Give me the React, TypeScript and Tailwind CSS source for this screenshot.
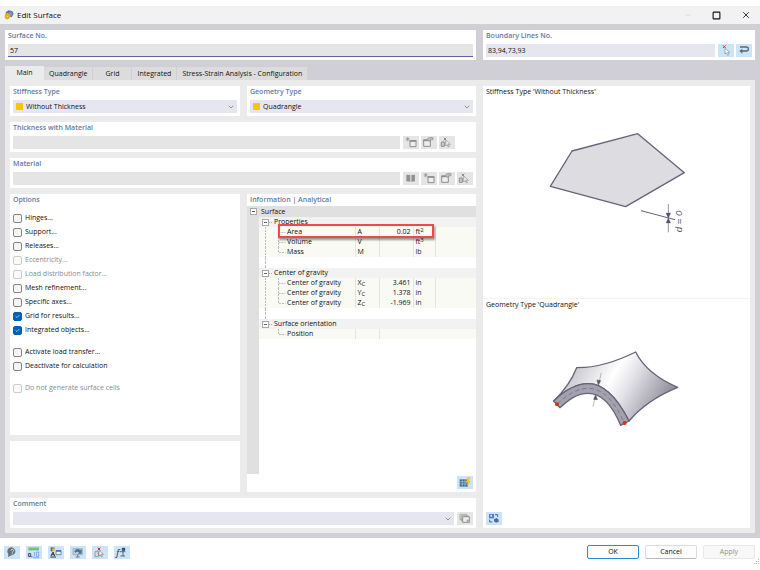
import type { ComponentProps, ReactNode } from 'react'
import { Check, ChevronDown, Minus, Square, X } from 'lucide-react'
import clsx from 'clsx'

const tabs = ['Main', 'Quadrangle', 'Grid', 'Integrated', 'Stress-Strain Analysis - Configuration']

const optionGroups = [
  [
    { label: 'Hinges...' },
    { label: 'Support...' },
    { label: 'Releases...' },
    { label: 'Eccentricity...', disabled: true },
    { label: 'Load distribution factor...', disabled: true },
    { label: 'Mesh refinement...' },
    { label: 'Specific axes...' },
    { label: 'Grid for results...', checked: true },
    { label: 'Integrated objects...', checked: true },
  ],
  [{ label: 'Activate load transfer...' }, { label: 'Deactivate for calculation' }],
  [{ label: 'Do not generate surface cells', disabled: true }],
]

type Row = { name: string; symbol?: ReactNode; value?: string; unit?: ReactNode }

const infoGroups: { title: string; rows: Row[] }[] = [
  {
    title: 'Properties',
    rows: [
      { name: 'Area', symbol: 'A', value: '0.02', unit: <>ft<Sup>2</Sup></> },
      { name: 'Volume', symbol: 'V', unit: <>ft<Sup>3</Sup></> },
      { name: 'Mass', symbol: 'M', unit: 'lb' },
    ],
  },
  {
    title: 'Center of gravity',
    rows: [
      { name: 'Center of gravity', symbol: <>X<Sub>C</Sub></>, value: '3.461', unit: 'in' },
      { name: 'Center of gravity', symbol: <>Y<Sub>C</Sub></>, value: '1.378', unit: 'in' },
      { name: 'Center of gravity', symbol: <>Z<Sub>C</Sub></>, value: '-1.969', unit: 'in' },
    ],
  },
  { title: 'Surface orientation', rows: [{ name: 'Position' }] },
]

function Sup({ children }: { children: ReactNode }) {
  return <sup className="top-[-2px] text-[6px] leading-none">{children}</sup>
}

function Sub({ children }: { children: ReactNode }) {
  return <sub className="bottom-[-1px] text-[6px] leading-none">{children}</sub>
}

function Panel({ title, htmlFor, className, children }: { title?: string; htmlFor?: string; className?: string; children?: ReactNode }) {
  return (
    <section className={clsx('flex flex-col bg-white px-[3px] pt-px pb-[3px]', className)}>
      {title && (
        <label htmlFor={htmlFor} className="mb-[3px] block h-[10px] font-semibold text-[#6478a3]">
          {title}
        </label>
      )}
      {children}
    </section>
  )
}

function IconButton({ label, className, children, ...props }: ComponentProps<'button'> & { label: string }) {
  return (
    <button
      type="button"
      aria-label={label}
      className={clsx('h-[13px] w-4 shrink-0 bg-[#cce4f7] disabled:bg-[#e5e5e5]', className)}
      {...props}
    >
      <svg viewBox="0 0 48 39" className="size-full" fill="none">
        {children}
      </svg>
    </button>
  )
}

function TypeSelect({ id, value }: { id: string; value: string }) {
  return (
    <div className="flex h-[13px] items-center bg-[#e6e6f1] px-[2px]">
      <span className="mr-[3px] ml-px size-[7px] bg-[#f7c600]" />
      <select id={id} className="h-full min-w-0 flex-1 appearance-none bg-transparent leading-[13px] outline-none">
        <option>{value}</option>
      </select>
      <ChevronDown className="size-2 text-[#666]" />
    </div>
  )
}

function NewIcon() {
  return (
    <g stroke="#8e8e8e" strokeWidth="2">
      <path d="M14 3v13M8 9h12M10 5l8 9M18 5l-8 9" />
      <path d="M21 14h18v18H21z" fill="#eee" strokeWidth="3" />
      <path d="M20 15h20" strokeWidth="5" />
    </g>
  )
}

function EditIcon() {
  return (
    <g stroke="#8e8e8e" strokeWidth="2">
      <path d="M8 12h20v19H8z" fill="#eee" strokeWidth="3" />
      <path d="M7 13h22" strokeWidth="5" />
      <path d="M17 11c5-7 11-7 19-6v6c-6 0-8 1-10 5z" fill="#bbb" />
    </g>
  )
}

function PickIcon() {
  return (
    <g stroke="#8e8e8e" strokeWidth="3">
      <path d="M14 5l8 8M22 5l-8 8" />
      <path d="M7 18h9v13H7z" fill="#ccc" />
      <path d="M20 12v18l4-4 4 7 3-1-4-7h7z" fill="#eee" strokeWidth="2" />
    </g>
  )
}

function Expander() {
  return (
    <svg viewBox="0 0 7 7" className="size-[7px] shrink-0" shapeRendering="crispEdges">
      <path d="M.5.5h6v6h-6z" fill="#fff" stroke="#a8a8a8" />
      <path d="M2 3.5h3" stroke="#666" />
    </svg>
  )
}

function OptionCheckbox({ label, checked, disabled }: { label: string; checked?: boolean; disabled?: boolean }) {
  return (
    <label className={clsx('relative flex h-[14px] items-center gap-[3px]', disabled && 'text-[#8a8a8a]')}>
      <input
        type="checkbox"
        defaultChecked={checked}
        disabled={disabled}
        className="peer size-[9px] appearance-none rounded-xs border border-[#858585] bg-[#f5f5f5] checked:border-[#005fb8] checked:bg-[#005fb8] disabled:border-[#ccc] disabled:bg-[#fafafa]"
      />
      <Check className="pointer-events-none absolute left-[2px] hidden size-[5px] text-white peer-checked:block" strokeWidth={3} />
      {label}
    </label>
  )
}

function TreeTable() {
  return (
    <table className="w-full table-fixed border-collapse leading-[10px]">
      <colgroup>
        <col className="w-[96px]" />
        <col className="w-6" />
        <col className="w-[34px]" />
        <col className="w-[22px]" />
        <col />
      </colgroup>
      <thead>
        <tr className="h-[11px] bg-[#e0e0e0] text-left">
          <th colSpan={5} className="p-0 pl-[2px] font-normal">Surface</th>
        </tr>
      </thead>
      {infoGroups.map((group, index) => {
        const last = index === infoGroups.length - 1
        return (
          <tbody key={group.title}>
            <tr className="h-[10px] bg-[#f2f2f2]">
              <td colSpan={5} className="p-0">
                <div className="flex h-[10px] items-center pl-[3px]">
                  <Expander />
                  <span className="mr-[2px] w-[3px] border-t border-dotted border-[#aaa]" />
                  {group.title}
                </div>
              </td>
            </tr>
            {group.rows.map((row, i) => (
              <tr key={i} className="h-[10px] bg-[#f9faf4]">
                <td className="border-r border-[#e4e4e0] p-0">
                  <div className="flex h-[10px] items-center">
                    <svg viewBox="0 0 28 10" className="h-[10px] w-7 shrink-0" stroke="#bdbdbd" strokeDasharray="2 1" fill="none">
                      {!last && <path d="M6.500 0v10" />}
                      <path d={i === group.rows.length - 1 ? 'M19.500 0v5.500h7' : 'M19.500 0v10M19.500 5.500h7'} />
                    </svg>
                    {row.name}
                  </div>
                </td>
                <td className="border-r border-[#e4e4e0] p-0 pl-[2px]">{row.symbol}</td>
                <td className={clsx('p-0 pr-[2px] text-right', !last && 'border-r border-[#e4e4e0]')}>{row.value}</td>
                <td className={clsx('p-0 pl-[2px] text-[#3c1030]', !last && 'border-r border-[#e4e4e0]')}>{row.unit}</td>
                <td className="p-0" />
              </tr>
            ))}
            {!last && (
              <tr className="h-[11px]">
                <td colSpan={5} className="p-0">
                  <div className="ml-[6px] h-[11px] border-l border-dashed border-[#bdbdbd]" />
                </td>
              </tr>
            )}
          </tbody>
        )
      })}
    </table>
  )
}

function ThicknessDrawing() {
  return (
    <svg viewBox="9 -39 801 603" className="h-[201px] w-full" fill="none" stroke="#666478">
      <path d="M276 123L473 71L613 188L437 290L211 229Z" fill="#dddce1" strokeWidth="4" strokeLinejoin="round" />
      <path d="M483 302L585 329" strokeWidth="3" />
      <path d="M565 282v85" strokeWidth="2" />
      <path d="M558 309h14l-7 16zM558 339h14l-7-15z" fill="#555368" />
      <text
        transform="translate(607 367) rotate(-90)"
        className="font-['Liberation_Sans',sans-serif]"
        fontSize="29"
        fontStyle="italic"
        fill="#555368"
        stroke="none"
      >
        d = 0
      </text>
    </svg>
  )
}

function QuadrangleDrawing() {
  return (
    <svg viewBox="9 60 801 600" className="h-[200px] w-full" fill="none" stroke="#666478" strokeWidth="4" strokeLinejoin="round">
      <defs>
        <linearGradient id="shell" gradientUnits="userSpaceOnUse" x1="285" y1="230" x2="530" y2="370">
          <stop offset="0" stopColor="#c9c8ce" />
          <stop offset="0.4" stopColor="#ffffff" />
          <stop offset="0.6" stopColor="#e2e1e6" />
          <stop offset="1" stopColor="#95939f" />
        </linearGradient>
      </defs>
      <path
        d="M221 333Q270 285 290 233Q370 234 467 186Q500 252 593 292Q500 330 447 393C425 350 385 281 325 281C285 281 250 305 221 333Z"
        fill="url(#shell)"
      />
      <path d="M221 333C250 305 285 281 325 281C385 281 425 350 447 393L422 406C405 365 375 310 325 310C290 310 265 330 240 353Z" fill="#a3a1ae" />
      <path d="M232 342C260 315 290 295 325 295C380 295 412 355 433 398" strokeWidth="2" strokeDasharray="13 9" />
      <path d="M364 248L357 278M339 350L346 320" strokeWidth="2" stroke="#99979f" />
      <path d="M351 270l11 2l-7 13zM341 328l11 1l-5-15z" fill="#555368" strokeWidth="2" />
      <circle cx="231" cy="343" r="4" fill="#c93a13" stroke="#c93a13" />
      <circle cx="434" cy="399" r="4" fill="#c93a13" stroke="#c93a13" />
    </svg>
  )
}

function TitleBar() {
  return (
    <header className="flex h-[18px] items-center bg-[#f2f2f2] pr-[9px] pl-1">
      <svg viewBox="0 0 30 30" className="mr-[3px] size-[10px]">
        <path d="M5 7L14 1l11 3 4 7-6 11-8-3-9-6z" fill="#55718f" />
        <path d="M13 9l7-5 6 8-5 9z" fill="#7b98b5" />
        <path d="M3 12l7-4 8 5v10l-8 6-8-5z" fill="#e3b327" />
        <path d="M7 16h6v7H7z" fill="#f7dc75" stroke="#a57c13" />
      </svg>
      <h1 className="flex-1 text-[8px]">Edit Surface</h1>
      <div className="flex items-center gap-5">
        <button type="button" aria-label="Minimize" disabled><Minus className="size-2 text-[#d5d5d5]" /></button>
        <button type="button" aria-label="Maximize"><Square className="size-[9px]" strokeWidth={3} /></button>
        <button type="button" aria-label="Close"><X className="size-[10px]" strokeWidth={2} /></button>
      </div>
    </header>
  )
}

function Footer() {
  return (
    <footer className="relative flex h-8 items-center bg-white pr-[5px] pb-1 pl-1">
      <div className="flex flex-1 gap-[6px]">
        <IconButton label="Help">
          <path d="M12 33l1-9a12 12 0 1 1 10 4z" fill="#65717a" />
          <path d="M20 13q5-6 9 0q0 3-4 5v2M25 22v3" stroke="#dce6ee" strokeWidth="3" />
        </IconButton>
        <IconButton label="Units and decimal places">
          <path d="M7 4h32v9H7z" fill="#7bc96f" />
          <path d="M10 9v4M16 9v4M22 9v4M28 9v4M34 9v4" stroke="#408a40" />
          <text x="5" y="32" fontSize="18" fontWeight="700" fill="#243040">0,</text>
          <path d="M25 18v13M31 18h7v13h-7zM21 35h19" stroke="#5b91dd" strokeWidth="2" />
        </IconButton>
        <IconButton label="Display properties">
          <path d="M8 4h6v6H8z" fill="#d32f2f" />
          <path d="M14 4h6v6h-6z" fill="#50b848" />
          <path d="M8 10h6v6H8z" fill="#2f66d3" />
          <path d="M14 10h6v6h-6z" fill="#f2c600" />
          <path d="M9 30l6-12 5 12M11 26h8M7 33h17" stroke="#2c3440" strokeWidth="3" />
          <path d="M24 14h15v12H24z" fill="#eef4fb" stroke="#4a5f8c" strokeWidth="2" />
          <path d="M24 15h15" stroke="#405cae" strokeWidth="4" />
        </IconButton>
        <IconButton label="View">
          <path d="M9 8h28v18H9z" fill="#c3d3e0" stroke="#879baa" strokeWidth="2" />
          <path d="M13 16Q20 5 31 12l4-3v14H23l4-4q-6-5-11 2z" fill="#4c7391" />
          <path d="M23 26v6M17 33h12" stroke="#67737c" strokeWidth="3" />
        </IconButton>
        <IconButton label="Deselect">
          <path d="M17 5l8 8M25 5l-8 8" stroke="#d92a2a" strokeWidth="3" />
          <path d="M9 17h10v15H9z" fill="#dedede" stroke="#777" strokeWidth="2" />
          <path d="M21 13v17l4-4 3 7 3-1-3-7h6z" fill="#fff" stroke="#777" strokeWidth="2" />
        </IconButton>
        <IconButton label="Formula">
          <text x="7" y="29" fontSize="28" fontStyle="italic" fill="#26323e">f</text>
          <path d="M25 7h7v6h-7z" fill="#47689b" stroke="#253f66" strokeWidth="3" />
          <path d="M18 17h16M27 17v13M19 30h14" stroke="#26323e" strokeWidth="2" />
        </IconButton>
      </div>
      <div className="flex gap-[6px]">
        <button type="button" className="h-[14px] w-[52px] rounded-xs border border-[#2f86ce] bg-[#fdfdfd]">OK</button>
        <button type="button" className="h-[14px] w-[52px] rounded-xs border border-[#dcdcdc] border-b-[#bbb] bg-[#fdfdfd]">Cancel</button>
        <button type="button" disabled className="h-[14px] w-[52px] rounded-xs border border-[#e8e8e8] bg-[#f8f8f8] text-[#909090]">Apply</button>
      </div>
      <svg viewBox="0 0 6 6" className="absolute right-0 bottom-[5px] size-[6px]" fill="#b5b5b5">
        <path d="M4 0h1v1H4zM2 2h1v1H2zM4 2h1v1H4zM0 4h1v1H0zM2 4h1v1H2zM4 4h1v1H4z" />
      </svg>
    </footer>
  )
}

export default function App() {
  return (
    <div className="flex min-h-screen flex-col bg-white pt-[6px] font-['Open_Sans','Noto_Sans',sans-serif] text-[7px] leading-[10px] text-[#111]">
      <TitleBar />

      <main className="flex flex-1 flex-col bg-[#d0cfd5] px-[5px] pt-[6px] pb-[5px]">
        <div className="mb-[6px] flex gap-[7px]">
          <Panel title="Surface No." htmlFor="surface-no" className="min-w-0 flex-1">
            <input id="surface-no" defaultValue="57" className="h-[13px] w-full border-b border-[#625ea8] bg-[#e5e5e5] px-[2px] outline-none" />
          </Panel>
          <Panel title="Boundary Lines No." htmlFor="boundary-lines" className="w-[272px]">
            <div className="flex gap-[2px]">
              <input id="boundary-lines" defaultValue="83,94,73,93" className="mr-px h-[13px] min-w-0 flex-1 bg-[#e6e6f1] px-[2px] outline-none" />
              <IconButton label="Select lines">
                <path d="M15 4l8 8M23 4l-8 8" stroke="#d9303a" strokeWidth="3" />
                <path d="M21 13v17l4-4 4 8 3-2-3-7h6z" fill="#fff" stroke="#888" strokeWidth="2" />
              </IconButton>
              <IconButton label="Reverse orientation">
                <path d="M12 9h19q6 0 6 6t-6 6H16" stroke="#666" strokeWidth="4" />
                <path d="M19 14l-9 7 9 8z" fill="#666" />
              </IconButton>
            </div>
          </Panel>
        </div>

        <div role="tablist" className="flex h-[14px] items-end">
          {tabs.map((tab, index) => (
            <button
              key={tab}
              type="button"
              role="tab"
              aria-selected={index === 0}
              className={clsx(
                'min-w-[39px] px-[5px]',
                index === 0 ? 'h-[14px] bg-[#ebebeb]' : 'h-[13px] border-r border-[#d0cfd5] bg-[#dcdcdc]',
              )}
            >
              {tab}
            </button>
          ))}
        </div>

        <div className="flex flex-1 gap-[7px] bg-[#ebebeb] px-[5px] pt-[6px] pb-[5px]">
          <div className="flex min-w-0 flex-1 flex-col gap-[6px]">
            <div className="grid grid-cols-[230px_1fr] gap-[7px]">
              <Panel title="Stiffness Type" htmlFor="stiffness-type">
                <TypeSelect id="stiffness-type" value="Without Thickness" />
              </Panel>
              <Panel title="Geometry Type" htmlFor="geometry-type">
                <TypeSelect id="geometry-type" value="Quadrangle" />
              </Panel>
            </div>

            <Panel title="Thickness with Material" htmlFor="thickness">
              <div className="flex gap-[2px] pr-[18px]">
                <select id="thickness" disabled className="mr-px h-[13px] min-w-0 flex-1 appearance-none bg-[#e5e5e5]" />
                <IconButton label="New thickness" disabled><NewIcon /></IconButton>
                <IconButton label="Edit thickness" disabled><EditIcon /></IconButton>
                <IconButton label="Pick thickness" disabled><PickIcon /></IconButton>
              </div>
            </Panel>

            <Panel title="Material" htmlFor="material">
              <div className="flex gap-[2px]">
                <select id="material" disabled className="mr-px h-[13px] min-w-0 flex-1 appearance-none bg-[#e5e5e5]" />
                <IconButton label="Material library" disabled>
                  <path d="M10 8l12 1v20l-12-1zM25 9l11-1v20l-11 1z" fill="#969696" />
                  <path d="M15 9v19M31 9v19" stroke="#777" />
                </IconButton>
                <IconButton label="New material" disabled><NewIcon /></IconButton>
                <IconButton label="Edit material" disabled><EditIcon /></IconButton>
                <IconButton label="Pick material" disabled><PickIcon /></IconButton>
              </div>
            </Panel>

            <div className="grid flex-1 grid-cols-[230px_1fr] gap-[7px]">
              <div className="flex flex-col gap-[6px]">
                <Panel title="Options" className="flex-1">
                  <div className="flex flex-col gap-2 pt-[3px]">
                    {optionGroups.map((group, index) => (
                      <div key={index}>
                        {group.map((option) => (
                          <OptionCheckbox key={option.label} {...option} />
                        ))}
                      </div>
                    ))}
                  </div>
                </Panel>
                <Panel className="h-[51px]" />
              </div>

              <section className="flex flex-col bg-white pt-px">
                <h2 className="mb-px h-[10px] px-[3px] font-semibold text-[#6478a3]">Information | Analytical</h2>
                <div className="relative flex flex-1">
                  <div className="w-3 shrink-0 bg-[#e0e0e0] pt-[2px] pl-[3px]">
                    <Expander />
                  </div>
                  <div className="min-w-0 flex-1">
                    <TreeTable />
                  </div>
                  <div className="pointer-events-none absolute top-[18px] left-[31px] h-[14px] w-[156px] border-2 border-[#ee4a4a] shadow-[1px_2px_2px_rgba(0,0,0,0.4)]" />
                </div>
                <div className="flex justify-end px-[3px] pt-[2px] pb-[3px]">
                  <IconButton label="Recalculate">
                    <path d="M8 10h25v22H8z" fill="#3d6a8f" />
                    <path d="M8 17h25M8 24h25M16 10v22M24 10v22" stroke="#a8cbe4" strokeWidth="2" />
                    <path d="M31 4h8l-3 11h5L30 34l2-14h-5z" fill="#f6c21c" />
                  </IconButton>
                </div>
              </section>
            </div>

            <Panel title="Comment" htmlFor="comment">
              <div className="flex gap-[3px]">
                <div className="flex h-[13px] min-w-0 flex-1 items-center bg-[#e6e6f1] px-[2px]">
                  <select id="comment" className="h-full min-w-0 flex-1 appearance-none bg-transparent outline-none" />
                  <ChevronDown className="size-2 text-[#666]" />
                </div>
                <IconButton label="Comment templates" disabled>
                  <path d="M9 7h20v16H9zM13 11h20v16H13z" fill="#ddd" stroke="#999" strokeWidth="2" />
                  <path d="M17 14h20v17H17z" fill="#eee" stroke="#8e8e8e" strokeWidth="3" />
                  <path d="M29 23h6v6h-6z" fill="#999" />
                </IconButton>
              </div>
            </Panel>
          </div>

          <aside className="flex w-[267px] flex-col bg-white pt-px pb-[3px]">
            <h2 className="h-[10px] px-[3px]">Stiffness Type 'Without Thickness'</h2>
            <ThicknessDrawing />
            <h2 className="h-3 border-t border-[#f3f3f3] px-[3px] pt-px">Geometry Type 'Quadrangle'</h2>
            <QuadrangleDrawing />
            <div className="mt-auto flex px-[3px]">
              <IconButton label="Switch picture">
                <path d="M9 6h15v13H9z" fill="#5279d8" />
                <path d="M13 8h5v6h-5z" fill="#d9e6fb" />
                <path d="M27 8h8v7M11 23v7h8" stroke="#586575" strokeWidth="3" />
                <path d="M24 22l8-4 6 5v6l-8 3-6-4z" fill="#496b9c" />
              </IconButton>
            </div>
          </aside>
        </div>
      </main>

      <Footer />
    </div>
  )
}
